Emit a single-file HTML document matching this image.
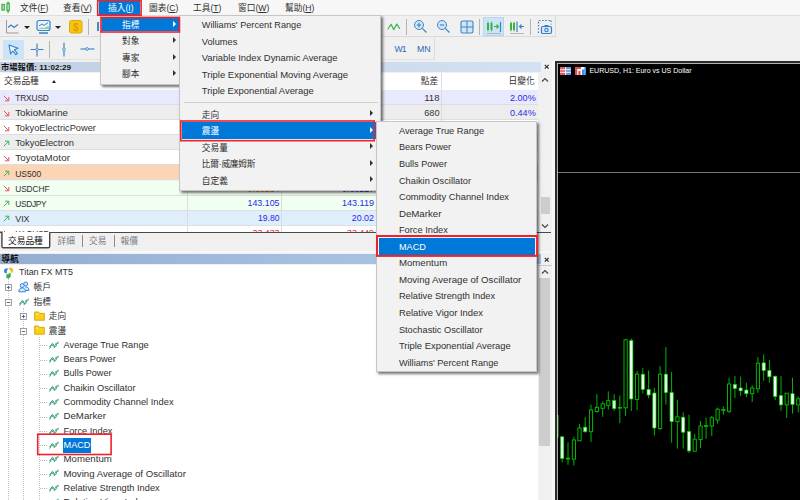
<!DOCTYPE html>
<html><head><meta charset="utf-8"><title>MT5</title>
<style>
html,body{margin:0;padding:0;overflow:hidden}
body{width:800px;height:500px;overflow:hidden;position:relative;background:#f0f0f0;
font-family:"Liberation Sans","Noto Sans CJK TC",sans-serif;font-size:9.3px;color:#303030;line-height:1}
.a{position:absolute}
.t{position:absolute;white-space:nowrap;line-height:12px;height:12px}
.menu{position:absolute;background:#f2f2f2;border:1px solid #c6c6c6;box-shadow:1.5px 1.5px 2.5px rgba(0,0,0,.55);box-sizing:border-box}
.arr{position:absolute;width:0;height:0;border-left:3px solid #222;border-top:3px solid transparent;border-bottom:3px solid transparent}
.red{position:absolute;border:1.6px solid #f0202c;box-sizing:border-box}
.hl{position:absolute;background:#0078d7}
.row{position:absolute;left:0;width:538px;box-sizing:border-box;border-bottom:1px solid #dedede}
.sep{position:absolute;width:1px;background:#b4b4b4}
.vl{position:absolute;width:1px;background:#dcdcdc}
</style></head><body>

<div class="a" style="left:0;top:0;width:800px;height:15px;background:#f7f7f7"></div>
<div class="a" style="left:0;top:15px;width:800px;height:1px;background:#dedede"></div>
<svg class="a" style="left:1px;top:1px" width="10" height="13" viewBox="0 0 10 13"><g fill="none" stroke="#3cb043" stroke-width="1.3"><rect x="1" y="3.5" width="2.2" height="5.5"/><rect x="6" y="2.5" width="2.2" height="7"/><path d="M7.1 0.5v2M7.1 9.5v2.5"/></g></svg>
<div class="t" style="left:20px;top:1.5px;color:#303030;font-size:8.6px"><span style="font-size:8.7px">文件</span>(<u>F</u>)</div>
<div class="t" style="left:63px;top:1.5px;color:#303030;font-size:8.6px"><span style="font-size:8.7px">查看</span>(<u>V</u>)</div>
<div class="hl" style="left:98.6px;top:1.2px;width:41.6px;height:13.4px"></div>
<div class="t" style="left:108px;top:1.5px;color:#fff;font-size:8.6px"><span style="font-size:8.7px">插入</span>(<u>I</u>)</div>
<div class="t" style="left:149px;top:1.5px;color:#303030;font-size:8.6px"><span style="font-size:8.7px">圖表</span>(<u>C</u>)</div>
<div class="t" style="left:193px;top:1.5px;color:#303030;font-size:8.6px"><span style="font-size:8.7px">工具</span>(<u>T</u>)</div>
<div class="t" style="left:238px;top:1.5px;color:#303030;font-size:8.6px"><span style="font-size:8.7px">窗口</span>(<u>W</u>)</div>
<div class="t" style="left:285px;top:1.5px;color:#303030;font-size:8.6px"><span style="font-size:8.7px">幫助</span>(<u>H</u>)</div>
<div class="a" style="left:0;top:16px;width:556px;height:21px;background:#f0f0f0;border-bottom:1px solid #dadada;border-right:1px solid #dadada;box-sizing:border-box"></div>
<svg class="a" style="left:5px;top:19px" width="16" height="16" viewBox="0 0 16 16"><path d="M1.5 1v13h12" fill="none" stroke="#9a9a9a" stroke-width="1"/><path d="M3 8.5l3-2.5 3 2.5 4-3" fill="none" stroke="#3a7fc4" stroke-width="1.2"/></svg>
<div class="a" style="left:24px;top:26px;width:0;height:0;border-top:3px solid #222;border-left:3px solid transparent;border-right:3px solid transparent"></div>
<svg class="a" style="left:36px;top:19px" width="16" height="16" viewBox="0 0 16 16"><rect x="1" y="1.5" width="13" height="10" rx="2" fill="#eaf3fb" stroke="#3a7fc4" stroke-width="1.2"/><path d="M3 7l3-2 2 1.5 4-3" fill="none" stroke="#3a7fc4" stroke-width="1"/><path d="M4 10v-1M6 10v-1.5M8 10v-1M10 10v-2M12 10v-2.5" stroke="#3cb043" stroke-width="1"/><path d="M3 14h9" stroke="#3a7fc4" stroke-width="1.5"/></svg>
<div class="a" style="left:55px;top:26px;width:0;height:0;border-top:3px solid #222;border-left:3px solid transparent;border-right:3px solid transparent"></div>
<svg class="a" style="left:69px;top:20px" width="14" height="14" viewBox="0 0 14 14"><rect x="0.5" y="0.5" width="12.5" height="12.5" rx="2" fill="#f6c511" stroke="#e0a800"/><text x="6.8" y="10.5" font-size="10" font-weight="bold" text-anchor="middle" fill="#e39b00" font-family="Liberation Sans, sans-serif">$</text></svg>
<div class="sep" style="left:88px;top:19px;height:16px"></div>
<div class="a" style="left:97px;top:22px;width:2px;height:9px;background:#4a86c8"></div>
<svg class="a" style="left:387px;top:21px" width="15" height="11" viewBox="0 0 15 11"><path d="M1 8L4 3.2 6.8 8.6 9.8 3 12.6 7.4" fill="none" stroke="#3cb854" stroke-width="1.2" stroke-linejoin="round" stroke-linecap="round"/></svg>
<div class="sep" style="left:406px;top:19px;height:16px"></div>
<svg class="a" style="left:413px;top:19px" width="16" height="16" viewBox="0 0 16 16"><circle cx="6" cy="6" r="4.5" fill="#d3e6f8" stroke="#3d85c6" stroke-width="1"/><path d="M3.8 6h4.4M6 3.8v4.4" stroke="#3a7fc4" stroke-width="1.1"/><path d="M9.3 9.3l4.2 4.2" stroke="#3d85c6" stroke-width="1.2"/></svg>
<svg class="a" style="left:436px;top:19px" width="16" height="16" viewBox="0 0 16 16"><circle cx="6" cy="6" r="4.5" fill="#d3e6f8" stroke="#3d85c6" stroke-width="1"/><path d="M3.8 6h4.4" stroke="#3a7fc4" stroke-width="1.1"/><path d="M9.3 9.3l4.2 4.2" stroke="#3d85c6" stroke-width="1.2"/></svg>
<svg class="a" style="left:460px;top:20px" width="14" height="14" viewBox="0 0 14 14"><rect x="1" y="1" width="12" height="12" rx="1.5" fill="#d3e6f8" stroke="#3d85c6" stroke-width="1.1"/><path d="M7 1v12M1 7h12" stroke="#3d85c6" stroke-width="1"/></svg>
<div class="sep" style="left:479.4px;top:19px;height:16px"></div>
<div class="a" style="left:483px;top:17px;width:21px;height:19px;background:#cce4f7;border:1px solid #b5d7f3;box-sizing:border-box"></div>
<svg class="a" style="left:485px;top:21px" width="18" height="14" viewBox="0 0 18 14"><g fill="#3cb043"><rect x="2" y="2" width="2" height="7"/><rect x="5.5" y="2" width="2" height="7"/></g><path d="M3 0.5v10M6.5 0.5v10" stroke="#3cb043" stroke-width=".8"/><path d="M9 5.5h4M11.5 3.5l2 2-2 2" fill="none" stroke="#3cb043" stroke-width="1.1"/><path d="M15.5 1v10" stroke="#3a7fc4" stroke-width="1.2"/><path d="M2 12.5h14" stroke="#a9a9a9" stroke-width=".8"/></svg>
<svg class="a" style="left:508px;top:21px" width="18" height="14" viewBox="0 0 18 14"><g fill="#3cb043"><rect x="2" y="2" width="2" height="7"/><rect x="5" y="2" width="2" height="7"/></g><path d="M3 0.5v10M6 0.5v10" stroke="#3cb043" stroke-width=".8"/><path d="M9 0.5v10.5" stroke="#3a7fc4" stroke-width="1.2"/><path d="M16 5.5h-4.5M13.5 3.5l-2 2 2 2" fill="none" stroke="#3a7fc4" stroke-width="1.1"/><path d="M2 12.5h14" stroke="#a9a9a9" stroke-width=".8"/></svg>
<div class="sep" style="left:529.6px;top:19px;height:16px"></div>
<svg class="a" style="left:537px;top:19px" width="16" height="16" viewBox="0 0 16 16"><path d="M1.5 14V1.5H14" fill="none" stroke="#3a7fc4" stroke-width="1.2" stroke-dasharray="1.6 1.6"/><path d="M14 1.5v4" fill="none" stroke="#3a7fc4" stroke-width="1.2" stroke-dasharray="1.6 1.6"/><rect x="4.5" y="7.5" width="10" height="7" rx="1.2" fill="#dcebf8" stroke="#3a7fc4" stroke-width="1.2"/><rect x="7.5" y="6" width="4" height="2" fill="#3a7fc4"/><circle cx="9.5" cy="11" r="1.7" fill="none" stroke="#3a7fc4" stroke-width="1.1"/></svg>
<div class="a" style="left:0;top:38px;width:435px;height:22px;background:#f0f0f0;border-right:1px solid #dadada;border-bottom:1px solid #e2e2e2;box-sizing:border-box"></div>
<div class="a" style="left:3px;top:40px;width:21px;height:19px;background:#cce4f7"></div>
<svg class="a" style="left:8px;top:44px" width="12" height="12" viewBox="0 0 12 12"><path d="M1 1l9 3.2-3.6 1.6 3 3.6-1.6 1.3-3-3.7L2.6 9.8z" fill="#eaf4fc" stroke="#3a7fc4" stroke-width="1.1" stroke-linejoin="round"/></svg>
<svg class="a" style="left:30px;top:43px" width="14" height="14" viewBox="0 0 14 14"><path d="M7 0.5v13M0.5 6.5h13" stroke="#3a7fc4" stroke-width="1.1"/><circle cx="7" cy="6.5" r="1.3" fill="#eaf4fc" stroke="#3a7fc4" stroke-width=".8"/></svg>
<div class="sep" style="left:49px;top:41px;height:17px"></div>
<svg class="a" style="left:60px;top:42px" width="8" height="15" viewBox="0 0 8 15"><path d="M4 0.5v14" stroke="#3a7fc4" stroke-width="1.1"/><circle cx="4" cy="7.5" r="1.4" fill="#eaf4fc" stroke="#3a7fc4" stroke-width=".8"/></svg>
<svg class="a" style="left:80px;top:45px" width="15" height="8" viewBox="0 0 15 8"><path d="M0.5 4h14" stroke="#3a7fc4" stroke-width="1.1"/><circle cx="7" cy="4" r="1.4" fill="#eaf4fc" stroke="#3a7fc4" stroke-width=".8"/></svg>
<div class="t" style="top:43.05px;font-size:8.65px;color:#2b6cb0;line-height:12px;height:12px;letter-spacing:-0.874px;left:394.40px;">W1</div>
<div class="t" style="top:43.05px;font-size:8.80px;color:#2b6cb0;line-height:12px;height:12px;left:416.90px;">MN</div>
<div class="a" style="left:0;top:61.5px;width:541px;height:10.6px;background:linear-gradient(to right,#c0cfe1,#d2e2f2)"></div>
<div class="t" style="left:1px;top:60.8px;color:#111;font-size:8.1px;font-weight:bold"><span style="font-size:8.3px">市場報價</span>: 11:02:29</div>
<svg class="a" style="left:544px;top:64px" width="6" height="6" viewBox="0 0 6 6"><path d="M.8 .8l3.8 3.8M4.6 .8l-3.8 3.8" stroke="#303030" stroke-width="1.2"/></svg>
<div class="a" style="left:0;top:73px;width:538px;height:17.2px;background:#fff"></div>
<div class="t" style="top:75.30px;font-size:8.7px;color:#303030;left:4.00px;">交易品種</div>
<div class="a" style="left:51.6px;top:79.7px;width:0;height:0;border-bottom:3px solid #222;border-left:2.5px solid transparent;border-right:2.5px solid transparent"></div>
<div class="t" style="top:75.20px;font-size:8.7px;color:#303030;right:361.80px;text-align:right;">點差</div>
<div class="t" style="top:75.20px;font-size:8.7px;color:#303030;right:265.40px;text-align:right;">日變化</div>
<div class="a" style="left:538px;top:73px;width:15px;height:159px;background:#f0f0f0"></div>
<svg class="a" style="left:541px;top:77px" width="8" height="6" viewBox="0 0 8 6"><path d="M1 4.5l3-3 3 3" fill="none" stroke="#444" stroke-width="1.2"/></svg>
<div class="a" style="left:541px;top:197px;width:9px;height:17px;background:#cdcdcd"></div>
<svg class="a" style="left:541px;top:223px" width="8" height="6" viewBox="0 0 8 6"><path d="M1 1.5l3 3 3-3" fill="none" stroke="#444" stroke-width="1.2"/></svg>
<div class="row" style="top:90.20px;height:15.05px;background:#e9e9fd"></div>
<svg class="a" style="left:3.4px;top:94.80px" width="7" height="7" viewBox="0 0 7 7"><path d="M.8 .8l4.8 4.8M2 5.8h3.8V2" fill="none" stroke="#e25660" stroke-width="1"/></svg>
<div class="t" style="top:92.25px;font-size:8.37px;color:#303030;line-height:12px;height:12px;letter-spacing:-0.134px;left:15.20px;">TRXUSD</div>
<div class="t" style="top:92.15px;font-size:9.56px;color:#333;line-height:12px;height:12px;right:360.50px;text-align:right;">118</div>
<div class="t" style="top:92.15px;font-size:9.08px;color:#2a2ae8;line-height:12px;height:12px;right:264.25px;text-align:right;">2.00%</div>
<div class="row" style="top:105.25px;height:15.05px;background:#ededed"></div>
<svg class="a" style="left:3.4px;top:109.85px" width="7" height="7" viewBox="0 0 7 7"><path d="M.8 .8l4.8 4.8M2 5.8h3.8V2" fill="none" stroke="#e25660" stroke-width="1"/></svg>
<div class="t" style="top:107.30px;font-size:9.77px;color:#303030;line-height:12px;height:12px;letter-spacing:0.020px;left:15.20px;">TokioMarine</div>
<div class="t" style="top:107.20px;font-size:9.14px;color:#333;line-height:12px;height:12px;right:360.50px;text-align:right;">680</div>
<div class="t" style="top:107.20px;font-size:9.08px;color:#2a2ae8;line-height:12px;height:12px;right:264.25px;text-align:right;">0.44%</div>
<div class="row" style="top:120.30px;height:15.05px;background:#ffffff"></div>
<svg class="a" style="left:3.4px;top:124.90px" width="7" height="7" viewBox="0 0 7 7"><path d="M.8 .8l4.8 4.8M2 5.8h3.8V2" fill="none" stroke="#e25660" stroke-width="1"/></svg>
<div class="t" style="top:122.35px;font-size:9.25px;color:#303030;line-height:12px;height:12px;left:15.20px;">TokyoElectricPower</div>
<div class="row" style="top:135.35px;height:15.05px;background:#ededed"></div>
<svg class="a" style="left:3.4px;top:139.55px" width="7" height="7" viewBox="0 0 7 7"><path d="M.8 6.2l4.8-4.8M2 1.2h3.8V5" fill="none" stroke="#3cb650" stroke-width="1"/></svg>
<div class="t" style="top:137.40px;font-size:9.35px;color:#303030;line-height:12px;height:12px;left:15.20px;">TokyoElectron</div>
<div class="row" style="top:150.40px;height:15.05px;background:#ffffff"></div>
<svg class="a" style="left:3.4px;top:155.00px" width="7" height="7" viewBox="0 0 7 7"><path d="M.8 .8l4.8 4.8M2 5.8h3.8V2" fill="none" stroke="#e25660" stroke-width="1"/></svg>
<div class="t" style="top:152.45px;font-size:9.77px;color:#303030;line-height:12px;height:12px;letter-spacing:0.101px;left:15.20px;">ToyotaMotor</div>
<div class="row" style="top:165.45px;height:15.05px;background:#fcd5b4"></div>
<svg class="a" style="left:3.4px;top:169.65px" width="7" height="7" viewBox="0 0 7 7"><path d="M.8 6.2l4.8-4.8M2 1.2h3.8V5" fill="none" stroke="#3cb650" stroke-width="1"/></svg>
<div class="t" style="top:167.50px;font-size:8.50px;color:#303030;line-height:12px;height:12px;left:15.20px;">US500</div>
<div class="row" style="top:180.50px;height:15.05px;background:#f0fff0"></div>
<svg class="a" style="left:3.4px;top:185.10px" width="7" height="7" viewBox="0 0 7 7"><path d="M.8 .8l4.8 4.8M2 5.8h3.8V2" fill="none" stroke="#e25660" stroke-width="1"/></svg>
<div class="t" style="top:182.55px;font-size:8.37px;color:#303030;line-height:12px;height:12px;letter-spacing:-0.096px;left:15.20px;">USDCHF</div>
<div class="t" style="top:183.25px;font-size:8.85px;color:#e8702a;line-height:12px;height:12px;right:520.50px;text-align:right;">0.88214</div>
<div class="t" style="top:183.25px;font-size:8.85px;color:#2a2ae8;line-height:12px;height:12px;right:426.00px;text-align:right;">0.88227</div>
<div class="row" style="top:195.55px;height:15.05px;background:#f0fff0"></div>
<svg class="a" style="left:3.4px;top:199.75px" width="7" height="7" viewBox="0 0 7 7"><path d="M.8 6.2l4.8-4.8M2 1.2h3.8V5" fill="none" stroke="#3cb650" stroke-width="1"/></svg>
<div class="t" style="top:197.60px;font-size:8.37px;color:#303030;line-height:12px;height:12px;letter-spacing:-0.304px;left:15.20px;">USDJPY</div>
<div class="t" style="top:197.00px;font-size:8.85px;color:#2a2ae8;line-height:12px;height:12px;right:520.50px;text-align:right;">143.105</div>
<div class="t" style="top:197.00px;font-size:9.04px;color:#2a2ae8;line-height:12px;height:12px;right:426.00px;text-align:right;">143.119</div>
<div class="row" style="top:210.60px;height:15.05px;background:#dfeefc"></div>
<svg class="a" style="left:3.4px;top:214.80px" width="7" height="7" viewBox="0 0 7 7"><path d="M.8 6.2l4.8-4.8M2 1.2h3.8V5" fill="none" stroke="#3cb650" stroke-width="1"/></svg>
<div class="t" style="top:212.65px;font-size:8.93px;color:#303030;line-height:12px;height:12px;left:15.20px;">VIX</div>
<div class="t" style="top:212.05px;font-size:8.59px;color:#2a2ae8;line-height:12px;height:12px;right:520.50px;text-align:right;">19.80</div>
<div class="t" style="top:212.05px;font-size:8.89px;color:#2a2ae8;line-height:12px;height:12px;right:426.00px;text-align:right;">20.02</div>
<div class="row" style="top:225.65px;height:15.05px;background:#ffffff"></div>
<svg class="a" style="left:3.4px;top:230.25px" width="7" height="7" viewBox="0 0 7 7"><path d="M.8 .8l4.8 4.8M2 5.8h3.8V2" fill="none" stroke="#e25660" stroke-width="1"/></svg>
<div class="t" style="top:227.70px;font-size:8.37px;color:#303030;line-height:12px;height:12px;letter-spacing:-0.190px;left:15.20px;">XAGUSD</div>
<div class="t" style="top:227.10px;font-size:8.83px;color:#e03030;line-height:12px;height:12px;right:520.50px;text-align:right;">33.433</div>
<div class="t" style="top:227.10px;font-size:8.83px;color:#e03030;line-height:12px;height:12px;right:426.00px;text-align:right;">33.449</div>
<div class="vl" style="left:187px;top:73px;height:159px"></div>
<div class="vl" style="left:281px;top:73px;height:159px"></div>
<div class="vl" style="left:376px;top:73px;height:159px"></div>
<div class="vl" style="left:440.8px;top:73px;height:159px"></div>
<div class="a" style="left:0;top:231.5px;width:553px;height:23px;background:#f0f0f0"></div>
<div class="a" style="left:0;top:250.6px;width:553px;height:2.4px;background:#f8f8f8"></div>
<div class="a" style="left:0;top:231.8px;width:551px;height:1.2px;background:#484848"></div>
<svg class="a" style="left:0;top:229px" width="60" height="22" viewBox="0 229 60 22"><path d="M1.9 232v14.2q0 1.6 1.6 1.6h44.6q1.6 0 1.6-1.6V232z" fill="#fff"/><path d="M0 232.3h1.900v13.900q0 1.6 1.6 1.6h44.6q1.6 0 1.6-1.6V232.3" fill="none" stroke="#444" stroke-width="1.4"/></svg>
<div class="t" style="top:234.80px;font-size:8.7px;color:#111;left:8.00px;">交易品種</div>
<div class="t" style="top:234.80px;font-size:8.7px;color:#7a7a7a;left:57.50px;">詳細</div>
<div class="a" style="left:81.6px;top:235.4px;width:1.3px;height:12px;background:#8e8e8e"></div>
<div class="t" style="top:234.80px;font-size:8.7px;color:#7a7a7a;left:89.00px;">交易</div>
<div class="a" style="left:113.6px;top:235.4px;width:1.3px;height:12px;background:#8e8e8e"></div>
<div class="t" style="top:234.80px;font-size:8.7px;color:#7a7a7a;left:120.50px;">報價</div>
<div class="a" style="left:0;top:254.4px;width:541px;height:10px;background:linear-gradient(to right,#93aed0,#a6c0e0 60%,#adc6e5)"></div>
<div class="t" style="top:253.20px;font-size:8.8px;color:#111;left:1.20px;font-weight:bold;">導航</div>
<svg class="a" style="left:544px;top:256.5px" width="6" height="6" viewBox="0 0 6 6"><path d="M.8 .8l3.8 3.8M4.6 .8l-3.8 3.8" stroke="#303030" stroke-width="1.2"/></svg>
<div class="a" style="left:0;top:265px;width:538px;height:235px;background:#fff"></div>
<div class="a" style="left:538px;top:265px;width:15px;height:235px;background:#f0f0f0"></div>
<svg class="a" style="left:541px;top:269px" width="8" height="6" viewBox="0 0 8 6"><path d="M1 4.5l3-3 3 3" fill="none" stroke="#444" stroke-width="1.2"/></svg>
<div class="a" style="left:539.2px;top:278.2px;width:10.6px;height:168px;background:#cdcdcd"></div><div class="a" style="left:538px;top:265px;width:13.5px;height:1px;background:#c9c9c9"></div>
<div class="a" style="left:8px;top:278px;width:0;height:222px;border-left:1px dotted #c4c4c4"></div>
<div class="a" style="left:23px;top:308px;width:0;height:192px;border-left:1px dotted #c4c4c4"></div>
<div class="a" style="left:38.5px;top:337px;width:0;height:163px;border-left:1px dotted #c4c4c4"></div>
<svg class="a" style="left:3px;top:266.5px" width="11" height="12" viewBox="0 0 11 12"><path d="M4.6 1.2C2.4 1 .9 2.2 1 4.2c.1 1.6 1.3 2.2 2.8 2.2V4.6c0-.9.4-1.4.8-1.6z" fill="#2f86e0"/><path d="M5.2 1.4l2.2-.9 2.6 1.6c.6 1.6.2 3.2-1.2 4L7.4 5.4c.6-.8.6-1.8-.2-2.4z" fill="#f4b920"/><path d="M3.4 7.2h2.4V6l2 .4v2.2c0 1.8-1 2.8-2.6 2.8S2.8 10.4 3.4 9z" fill="#36b24a"/></svg>
<div class="t" style="top:265.95px;font-size:8.97px;color:#303030;line-height:12px;height:12px;left:19.00px;">Titan FX MT5</div>
<svg class="a" style="left:5.0px;top:283.7px" width="7" height="7" viewBox="0 0 7 7"><rect x=".5" y=".5" width="6" height="6" fill="#fff" stroke="#8a8a8a" stroke-width=".8"/><path d="M1.8 3.5h3.4" stroke="#3a5fa0" stroke-width=".9"/><path d="M3.5 1.8v3.4" stroke="#3a5fa0" stroke-width=".9"/></svg>
<svg class="a" style="left:18px;top:281px" width="12" height="12" viewBox="0 0 12 12"><circle cx="7.6" cy="3" r="2" fill="#d6e9fb" stroke="#2f86d9" stroke-width="1"/><path d="M7.2 6c2.4-.2 3.8 1 3.8 3.4H8" fill="#d6e9fb" stroke="#2f86d9" stroke-width="1"/><circle cx="4.2" cy="4.6" r="2" fill="#d6e9fb" stroke="#2f86d9" stroke-width="1"/><path d="M.8 10.8c0-2.8 1.4-3.8 3.4-3.8s3.4 1 3.4 3.8z" fill="#d6e9fb" stroke="#2f86d9" stroke-width="1"/></svg>
<div class="t" style="top:281.10px;font-size:8.7px;color:#303030;left:33.50px;">帳戶</div>
<svg class="a" style="left:5.0px;top:298.5px" width="7" height="7" viewBox="0 0 7 7"><rect x=".5" y=".5" width="6" height="6" fill="#fff" stroke="#8a8a8a" stroke-width=".8"/><path d="M1.8 3.5h3.4" stroke="#3a5fa0" stroke-width=".9"/></svg>
<svg class="a" style="left:19px;top:297.50px" width="10" height="9" viewBox="0 0 10 9"><path d="M.5 7.6C1.8 7.6 2 2.4 3.4 2.4S4.8 6.4 5.9 6.4 7.6 1.2 9.6 1" fill="none" stroke="#3a7fc4" stroke-width="1"/><path d="M.5 6.2l2.4-2.6 2.2 2.4 2.2-3.8 2.3-.2" fill="none" stroke="#35b34a" stroke-width="1.1" stroke-dasharray="2.2 .9"/></svg>
<div class="t" style="top:296.10px;font-size:8.7px;color:#303030;left:33.50px;">指標</div>
<svg class="a" style="left:20.0px;top:312.5px" width="7" height="7" viewBox="0 0 7 7"><rect x=".5" y=".5" width="6" height="6" fill="#fff" stroke="#8a8a8a" stroke-width=".8"/><path d="M1.8 3.5h3.4" stroke="#3a5fa0" stroke-width=".9"/><path d="M3.5 1.8v3.4" stroke="#3a5fa0" stroke-width=".9"/></svg>
<svg class="a" style="left:33.5px;top:310.6px" width="11" height="10" viewBox="0 0 11 10"><path d="M.7 1h3.8l.8 1.4h5v6.8H.7z" fill="#fbd01c" stroke="#dfa800" stroke-width="1"/><path d="M2.4 3.2h1.800" stroke="#fff6c8" stroke-width="1"/></svg>
<div class="t" style="top:309.70px;font-size:8.7px;color:#303030;left:48.80px;">走向</div>
<svg class="a" style="left:20.0px;top:327.5px" width="7" height="7" viewBox="0 0 7 7"><rect x=".5" y=".5" width="6" height="6" fill="#fff" stroke="#8a8a8a" stroke-width=".8"/><path d="M1.8 3.5h3.4" stroke="#3a5fa0" stroke-width=".9"/></svg>
<svg class="a" style="left:33.5px;top:325.2px" width="11" height="10" viewBox="0 0 11 10"><path d="M.7 1h3.8l.8 1.4h5v6.8H.7z" fill="#fbd01c" stroke="#dfa800" stroke-width="1"/><path d="M2.4 3.2h1.800" stroke="#fff6c8" stroke-width="1"/></svg>
<div class="t" style="top:324.70px;font-size:8.7px;color:#303030;left:48.80px;">震盪</div>
<div class="a" style="left:40px;top:345.20px;width:7px;height:0;border-top:1px dotted #b8b8b8"></div>
<svg class="a" style="left:49px;top:340.70px" width="10" height="9" viewBox="0 0 10 9"><path d="M.5 7.6C1.8 7.6 2 2.4 3.4 2.4S4.8 6.4 5.9 6.4 7.6 1.2 9.6 1" fill="none" stroke="#3a7fc4" stroke-width="1"/><path d="M.5 6.2l2.4-2.6 2.2 2.4 2.2-3.8 2.3-.2" fill="none" stroke="#35b34a" stroke-width="1.1" stroke-dasharray="2.2 .9"/></svg>
<div class="t" style="top:338.85px;font-size:9.26px;color:#303030;line-height:12px;height:12px;left:63.50px;">Average True Range</div>
<div class="a" style="left:40px;top:359.50px;width:7px;height:0;border-top:1px dotted #b8b8b8"></div>
<svg class="a" style="left:49px;top:355.00px" width="10" height="9" viewBox="0 0 10 9"><path d="M.5 7.6C1.8 7.6 2 2.4 3.4 2.4S4.8 6.4 5.9 6.4 7.6 1.2 9.6 1" fill="none" stroke="#3a7fc4" stroke-width="1"/><path d="M.5 6.2l2.4-2.6 2.2 2.4 2.2-3.8 2.3-.2" fill="none" stroke="#35b34a" stroke-width="1.1" stroke-dasharray="2.2 .9"/></svg>
<div class="t" style="top:353.15px;font-size:9.14px;color:#303030;line-height:12px;height:12px;left:63.50px;">Bears Power</div>
<div class="a" style="left:40px;top:373.80px;width:7px;height:0;border-top:1px dotted #b8b8b8"></div>
<svg class="a" style="left:49px;top:369.30px" width="10" height="9" viewBox="0 0 10 9"><path d="M.5 7.6C1.8 7.6 2 2.4 3.4 2.4S4.8 6.4 5.9 6.4 7.6 1.2 9.6 1" fill="none" stroke="#3a7fc4" stroke-width="1"/><path d="M.5 6.2l2.4-2.6 2.2 2.4 2.2-3.8 2.3-.2" fill="none" stroke="#35b34a" stroke-width="1.1" stroke-dasharray="2.2 .9"/></svg>
<div class="t" style="top:367.45px;font-size:9.11px;color:#303030;line-height:12px;height:12px;left:63.50px;">Bulls Power</div>
<div class="a" style="left:40px;top:388.10px;width:7px;height:0;border-top:1px dotted #b8b8b8"></div>
<svg class="a" style="left:49px;top:383.60px" width="10" height="9" viewBox="0 0 10 9"><path d="M.5 7.6C1.8 7.6 2 2.4 3.4 2.4S4.8 6.4 5.9 6.4 7.6 1.2 9.6 1" fill="none" stroke="#3a7fc4" stroke-width="1"/><path d="M.5 6.2l2.4-2.6 2.2 2.4 2.2-3.8 2.3-.2" fill="none" stroke="#35b34a" stroke-width="1.1" stroke-dasharray="2.2 .9"/></svg>
<div class="t" style="top:381.75px;font-size:9.28px;color:#303030;line-height:12px;height:12px;left:63.50px;">Chaikin Oscillator</div>
<div class="a" style="left:40px;top:402.40px;width:7px;height:0;border-top:1px dotted #b8b8b8"></div>
<svg class="a" style="left:49px;top:397.90px" width="10" height="9" viewBox="0 0 10 9"><path d="M.5 7.6C1.8 7.6 2 2.4 3.4 2.4S4.8 6.4 5.9 6.4 7.6 1.2 9.6 1" fill="none" stroke="#3a7fc4" stroke-width="1"/><path d="M.5 6.2l2.4-2.6 2.2 2.4 2.2-3.8 2.3-.2" fill="none" stroke="#35b34a" stroke-width="1.1" stroke-dasharray="2.2 .9"/></svg>
<div class="t" style="top:396.05px;font-size:9.35px;color:#303030;line-height:12px;height:12px;left:63.50px;">Commodity Channel Index</div>
<div class="a" style="left:40px;top:416.70px;width:7px;height:0;border-top:1px dotted #b8b8b8"></div>
<svg class="a" style="left:49px;top:412.20px" width="10" height="9" viewBox="0 0 10 9"><path d="M.5 7.6C1.8 7.6 2 2.4 3.4 2.4S4.8 6.4 5.9 6.4 7.6 1.2 9.6 1" fill="none" stroke="#3a7fc4" stroke-width="1"/><path d="M.5 6.2l2.4-2.6 2.2 2.4 2.2-3.8 2.3-.2" fill="none" stroke="#35b34a" stroke-width="1.1" stroke-dasharray="2.2 .9"/></svg>
<div class="t" style="top:410.35px;font-size:9.68px;color:#303030;line-height:12px;height:12px;left:63.50px;">DeMarker</div>
<div class="a" style="left:40px;top:431.00px;width:7px;height:0;border-top:1px dotted #b8b8b8"></div>
<svg class="a" style="left:49px;top:426.50px" width="10" height="9" viewBox="0 0 10 9"><path d="M.5 7.6C1.8 7.6 2 2.4 3.4 2.4S4.8 6.4 5.9 6.4 7.6 1.2 9.6 1" fill="none" stroke="#3a7fc4" stroke-width="1"/><path d="M.5 6.2l2.4-2.6 2.2 2.4 2.2-3.8 2.3-.2" fill="none" stroke="#35b34a" stroke-width="1.1" stroke-dasharray="2.2 .9"/></svg>
<div class="t" style="top:424.65px;font-size:9.28px;color:#303030;line-height:12px;height:12px;left:63.50px;">Force Index</div>
<div class="a" style="left:40px;top:445.30px;width:7px;height:0;border-top:1px dotted #b8b8b8"></div>
<svg class="a" style="left:49px;top:440.80px" width="10" height="9" viewBox="0 0 10 9"><path d="M.5 7.6C1.8 7.6 2 2.4 3.4 2.4S4.8 6.4 5.9 6.4 7.6 1.2 9.6 1" fill="none" stroke="#3a7fc4" stroke-width="1"/><path d="M.5 6.2l2.4-2.6 2.2 2.4 2.2-3.8 2.3-.2" fill="none" stroke="#35b34a" stroke-width="1.1" stroke-dasharray="2.2 .9"/></svg>
<div class="hl" style="left:63px;top:438.00px;width:28px;height:14.5px"></div>
<div class="t" style="top:438.95px;font-size:9.17px;color:#fff;line-height:12px;height:12px;left:63.50px;">MACD</div>
<div class="a" style="left:40px;top:459.60px;width:7px;height:0;border-top:1px dotted #b8b8b8"></div>
<svg class="a" style="left:49px;top:455.10px" width="10" height="9" viewBox="0 0 10 9"><path d="M.5 7.6C1.8 7.6 2 2.4 3.4 2.4S4.8 6.4 5.9 6.4 7.6 1.2 9.6 1" fill="none" stroke="#3a7fc4" stroke-width="1"/><path d="M.5 6.2l2.4-2.6 2.2 2.4 2.2-3.8 2.3-.2" fill="none" stroke="#35b34a" stroke-width="1.1" stroke-dasharray="2.2 .9"/></svg>
<div class="t" style="top:453.25px;font-size:9.66px;color:#303030;line-height:12px;height:12px;left:63.50px;">Momentum</div>
<div class="a" style="left:40px;top:473.90px;width:7px;height:0;border-top:1px dotted #b8b8b8"></div>
<svg class="a" style="left:49px;top:469.40px" width="10" height="9" viewBox="0 0 10 9"><path d="M.5 7.6C1.8 7.6 2 2.4 3.4 2.4S4.8 6.4 5.9 6.4 7.6 1.2 9.6 1" fill="none" stroke="#3a7fc4" stroke-width="1"/><path d="M.5 6.2l2.4-2.6 2.2 2.4 2.2-3.8 2.3-.2" fill="none" stroke="#35b34a" stroke-width="1.1" stroke-dasharray="2.2 .9"/></svg>
<div class="t" style="top:467.55px;font-size:9.65px;color:#303030;line-height:12px;height:12px;left:63.50px;">Moving Average of Oscillator</div>
<div class="a" style="left:40px;top:488.20px;width:7px;height:0;border-top:1px dotted #b8b8b8"></div>
<svg class="a" style="left:49px;top:483.70px" width="10" height="9" viewBox="0 0 10 9"><path d="M.5 7.6C1.8 7.6 2 2.4 3.4 2.4S4.8 6.4 5.9 6.4 7.6 1.2 9.6 1" fill="none" stroke="#3a7fc4" stroke-width="1"/><path d="M.5 6.2l2.4-2.6 2.2 2.4 2.2-3.8 2.3-.2" fill="none" stroke="#35b34a" stroke-width="1.1" stroke-dasharray="2.2 .9"/></svg>
<div class="t" style="top:481.85px;font-size:9.26px;color:#303030;line-height:12px;height:12px;left:63.50px;">Relative Strength Index</div>
<div class="a" style="left:40px;top:502.50px;width:7px;height:0;border-top:1px dotted #b8b8b8"></div>
<svg class="a" style="left:49px;top:498.00px" width="10" height="9" viewBox="0 0 10 9"><path d="M.5 7.6C1.8 7.6 2 2.4 3.4 2.4S4.8 6.4 5.9 6.4 7.6 1.2 9.6 1" fill="none" stroke="#3a7fc4" stroke-width="1"/><path d="M.5 6.2l2.4-2.6 2.2 2.4 2.2-3.8 2.3-.2" fill="none" stroke="#35b34a" stroke-width="1.1" stroke-dasharray="2.2 .9"/></svg>
<div class="t" style="top:496.15px;font-size:9.44px;color:#303030;line-height:12px;height:12px;left:63.50px;">Relative Vigor Index</div>
<div class="a" style="left:551.5px;top:61px;width:3.7px;height:439px;background:#f8f8f8"></div>
<div class="a" style="left:555.2px;top:61.2px;width:245px;height:439px;background:#000"></div>
<div class="a" style="left:555.2px;top:61.2px;width:245px;height:1.7px;background:#2c2c2c"></div>
<div class="a" style="left:555.2px;top:61.2px;width:1.6px;height:439px;background:#2c2c2c"></div>
<div class="a" style="left:556.8px;top:62.9px;width:0.9px;height:437px;background:#b0b0b0"></div>
<div class="a" style="left:556.8px;top:62.9px;width:244px;height:0.9px;background:#b0b0b0"></div>
<div class="a" style="left:557.6px;top:172.2px;width:243px;height:1.3px;background:#70767c"></div>
<svg class="a" style="left:560px;top:67px" width="11" height="8" viewBox="0 0 11 8"><rect width="11" height="8" fill="#e8eef6"/><rect x="0" y="0" width="5" height="8" fill="#e8585f"/><rect x="6" y="0" width="5" height="8" fill="#5a9bdc"/><path d="M0 2.7h11M0 5.3h11" stroke="#fff" stroke-width=".9"/></svg>
<svg class="a" style="left:575px;top:67px" width="11" height="8" viewBox="0 0 11 8"><rect width="11" height="8" fill="#fff"/><rect x="0" y="0" width="2.2" height="8" fill="#e8484f"/><rect x="0" y="0" width="6" height="2" fill="#e8484f"/><rect x="3.4" y="4" width="2" height="4" fill="#e8484f"/><rect x="7" y="2.5" width="2.4" height="5.5" fill="#3f8fe0"/><rect x="9.4" y="0" width="1.6" height="8" fill="#3f8fe0"/></svg>
<div class="t" style="top:64.75px;font-size:7.03px;color:#fff;line-height:12px;height:12px;left:589.40px;">EURUSD, H1: Euro vs US Dollar</div>
<svg class="a" style="left:0;top:0" width="800" height="500" viewBox="0 0 800 500"><rect x="557" y="415" width="1.3" height="22.6" fill="#9be89b"/><path d="M562.2 436.8V462.4" stroke="#00b400" stroke-width="1"/><rect x="560.6" y="436.8" width="3.2" height="21.6" fill="#eaffea" stroke="#00d200" stroke-width=".7"/><path d="M568.0 442.4V458.2M568.0 459V464.8" stroke="#00b400" stroke-width="1"/><rect x="566.4" y="458.2" width="3.2" height="0.8" fill="#000" stroke="#00c800" stroke-width=".9"/><path d="M573.9 436.8V440M573.9 459.2V465.6" stroke="#00b400" stroke-width="1"/><rect x="572.3" y="440" width="3.2" height="19.2" fill="#000" stroke="#00c800" stroke-width=".9"/><path d="M579.5 424V428M579.5 440.8V440.8" stroke="#00b400" stroke-width="1"/><rect x="577.9" y="428" width="3.2" height="12.8" fill="#000" stroke="#00c800" stroke-width=".9"/><path d="M585.2 417.3V432.8" stroke="#00b400" stroke-width="1"/><rect x="583.6" y="427.2" width="3.2" height="4.5" fill="#eaffea" stroke="#00d200" stroke-width=".7"/><path d="M591.0 404.5V410M591.0 431.7V442" stroke="#00b400" stroke-width="1"/><rect x="589.4" y="410" width="3.2" height="21.7" fill="#000" stroke="#00c800" stroke-width=".9"/><path d="M596.9 394.2V407.3M596.9 411.5V412.6" stroke="#00b400" stroke-width="1"/><rect x="595.3" y="407.3" width="3.2" height="4.2" fill="#000" stroke="#00c800" stroke-width=".9"/><path d="M602.7 401.4V403.8M602.7 408.3V416.8" stroke="#00b400" stroke-width="1"/><rect x="601.1" y="403.8" width="3.2" height="4.5" fill="#000" stroke="#00c800" stroke-width=".9"/><path d="M608.3 391.3V400.6M608.3 405.4V409.5" stroke="#00b400" stroke-width="1"/><rect x="606.7" y="400.6" width="3.2" height="4.8" fill="#000" stroke="#00c800" stroke-width=".9"/><path d="M614.2 394.2V411" stroke="#00b400" stroke-width="1"/><rect x="612.6" y="400.6" width="3.2" height="8.0" fill="#eaffea" stroke="#00d200" stroke-width=".7"/><path d="M619.8 395.5V407.4M619.8 408.2V423.2" stroke="#00b400" stroke-width="1"/><rect x="618.2" y="407.4" width="3.2" height="0.8" fill="#000" stroke="#00c800" stroke-width=".9"/><path d="M625.6 339V339.8M625.6 407.8V416" stroke="#00b400" stroke-width="1"/><rect x="624.0" y="339.8" width="3.2" height="68.0" fill="#000" stroke="#00c800" stroke-width=".9"/><path d="M631.3 338.5V411" stroke="#00b400" stroke-width="1"/><rect x="629.7" y="340.6" width="3.2" height="58.4" fill="#eaffea" stroke="#00d200" stroke-width=".7"/><path d="M637.1 371V374.2M637.1 399.5V410.2" stroke="#00b400" stroke-width="1"/><rect x="635.5" y="374.2" width="3.2" height="25.3" fill="#000" stroke="#00c800" stroke-width=".9"/><path d="M642.8 367.8V393.4" stroke="#00b400" stroke-width="1"/><rect x="641.2" y="374.2" width="3.2" height="15.2" fill="#eaffea" stroke="#00d200" stroke-width=".7"/><path d="M648.6 370.5V398.2" stroke="#00b400" stroke-width="1"/><rect x="647.0" y="389.4" width="3.2" height="5.6" fill="#eaffea" stroke="#00d200" stroke-width=".7"/><path d="M654.4 387.8V435.5" stroke="#00b400" stroke-width="1"/><rect x="652.8" y="393" width="3.2" height="35.0" fill="#eaffea" stroke="#00d200" stroke-width=".7"/><path d="M660.1 366.2V374.2M660.1 428.5V430" stroke="#00b400" stroke-width="1"/><rect x="658.5" y="374.2" width="3.2" height="54.3" fill="#000" stroke="#00c800" stroke-width=".9"/><path d="M665.9 347V404.6" stroke="#00b400" stroke-width="1"/><rect x="664.3" y="374.2" width="3.2" height="18.4" fill="#eaffea" stroke="#00d200" stroke-width=".7"/><path d="M671.6 372V442.5" stroke="#00b400" stroke-width="1"/><rect x="670.0" y="392.6" width="3.2" height="29.0" fill="#eaffea" stroke="#00d200" stroke-width=".7"/><path d="M677.4 399.8V416.8M677.4 421.6V448.6" stroke="#00b400" stroke-width="1"/><rect x="675.8" y="416.8" width="3.2" height="4.8" fill="#000" stroke="#00c800" stroke-width=".9"/><path d="M683.2 412.4V448.5" stroke="#00b400" stroke-width="1"/><rect x="681.6" y="417.2" width="3.2" height="15.0" fill="#eaffea" stroke="#00d200" stroke-width=".7"/><path d="M689.0 414.8V452.8" stroke="#00b400" stroke-width="1"/><rect x="687.4" y="431.5" width="3.2" height="19.4" fill="#eaffea" stroke="#00d200" stroke-width=".7"/><path d="M694.7 434V439.2M694.7 451.2V451.2" stroke="#00b400" stroke-width="1"/><rect x="693.1" y="439.2" width="3.2" height="12.0" fill="#000" stroke="#00c800" stroke-width=".9"/><path d="M700.5 421V426M700.5 439.5V448.2" stroke="#00b400" stroke-width="1"/><rect x="698.9" y="426" width="3.2" height="13.5" fill="#000" stroke="#00c800" stroke-width=".9"/><path d="M706.1 417.7V425.6M706.1 426.4V438.8" stroke="#00b400" stroke-width="1"/><rect x="704.5" y="425.6" width="3.2" height="0.8" fill="#000" stroke="#00c800" stroke-width=".9"/><path d="M711.8 416V417.7M711.8 426V436" stroke="#00b400" stroke-width="1"/><rect x="710.2" y="417.7" width="3.2" height="8.3" fill="#000" stroke="#00c800" stroke-width=".9"/><path d="M717.6 407.6V409.2M717.6 420V423.6" stroke="#00b400" stroke-width="1"/><rect x="716.0" y="409.2" width="3.2" height="10.8" fill="#000" stroke="#00c800" stroke-width=".9"/><path d="M723.4 406.5V409.6M723.4 410.4V414.8" stroke="#00b400" stroke-width="1"/><rect x="721.8" y="409.6" width="3.2" height="0.8" fill="#000" stroke="#00c800" stroke-width=".9"/><path d="M729.1 377.7V384M729.1 411.3V412.9" stroke="#00b400" stroke-width="1"/><rect x="727.5" y="384" width="3.2" height="27.3" fill="#000" stroke="#00c800" stroke-width=".9"/><path d="M734.9 376V398" stroke="#00b400" stroke-width="1"/><rect x="733.3" y="384.4" width="3.2" height="4.0" fill="#eaffea" stroke="#00d200" stroke-width=".7"/><path d="M740.6 376.7V396" stroke="#00b400" stroke-width="1"/><rect x="739.0" y="388" width="3.2" height="2.8" fill="#eaffea" stroke="#00d200" stroke-width=".7"/><path d="M746.4 382.8V397.2" stroke="#00b400" stroke-width="1"/><rect x="744.8" y="390" width="3.2" height="3.7" fill="#eaffea" stroke="#00d200" stroke-width=".7"/><path d="M752.2 385.2V388M752.2 393.7V402" stroke="#00b400" stroke-width="1"/><rect x="750.6" y="388" width="3.2" height="5.7" fill="#000" stroke="#00c800" stroke-width=".9"/><path d="M757.9 357.1V363.2M757.9 388.8V392.8" stroke="#00b400" stroke-width="1"/><rect x="756.3" y="363.2" width="3.2" height="25.6" fill="#000" stroke="#00c800" stroke-width=".9"/><path d="M763.7 354.4V380.8" stroke="#00b400" stroke-width="1"/><rect x="762.1" y="362.9" width="3.2" height="7.5" fill="#eaffea" stroke="#00d200" stroke-width=".7"/><path d="M769.4 360V382.7" stroke="#00b400" stroke-width="1"/><rect x="767.8" y="370.4" width="3.2" height="6.4" fill="#eaffea" stroke="#00d200" stroke-width=".7"/><path d="M775.2 375.5V400" stroke="#00b400" stroke-width="1"/><rect x="773.6" y="376.3" width="3.2" height="20.2" fill="#eaffea" stroke="#00d200" stroke-width=".7"/><path d="M781.0 376V410.8" stroke="#00b400" stroke-width="1"/><rect x="779.4" y="395.6" width="3.2" height="9.3" fill="#eaffea" stroke="#00d200" stroke-width=".7"/><path d="M786.7 393.2V393.2M786.7 404.9V418" stroke="#00b400" stroke-width="1"/><rect x="785.1" y="393.2" width="3.2" height="11.7" fill="#000" stroke="#00c800" stroke-width=".9"/><path d="M792.5 377.7V413.5" stroke="#00b400" stroke-width="1"/><rect x="790.9" y="393.7" width="3.2" height="10.7" fill="#eaffea" stroke="#00d200" stroke-width=".7"/><path d="M798.2 396.4V398.8M798.2 404.9V412.4" stroke="#00b400" stroke-width="1"/><rect x="796.6" y="398.8" width="3.2" height="6.1" fill="#000" stroke="#00c800" stroke-width=".9"/></svg>
<div class="menu" style="left:100px;top:16px;width:81px;height:68.6px"></div>
<div class="hl" style="left:101.6px;top:18.4px;width:77px;height:12.9px"></div>
<div class="t" style="top:18.90px;font-size:8.7px;color:#fff;left:122.00px;">指標</div>
<div class="arr" style="left:173.4px;top:20.60px;border-left-color:#fff"></div>
<div class="t" style="top:35.40px;font-size:8.7px;color:#303030;left:122.00px;">對象</div>
<div class="arr" style="left:173.4px;top:37.10px;border-left-color:#303030"></div>
<div class="t" style="top:51.90px;font-size:8.7px;color:#303030;left:122.00px;">專家</div>
<div class="arr" style="left:173.4px;top:53.60px;border-left-color:#303030"></div>
<div class="t" style="top:68.40px;font-size:8.7px;color:#303030;left:122.00px;">腳本</div>
<div class="arr" style="left:173.4px;top:70.10px;border-left-color:#303030"></div>
<div class="menu" style="left:179.4px;top:15.4px;width:201.6px;height:175.2px"></div>
<div class="t" style="top:19.15px;font-size:9.17px;color:#303030;line-height:12px;height:12px;left:201.80px;">Williams&#x27; Percent Range</div>
<div class="t" style="top:35.63px;font-size:9.28px;color:#303030;line-height:12px;height:12px;left:201.80px;">Volumes</div>
<div class="t" style="top:52.11px;font-size:9.41px;color:#303030;line-height:12px;height:12px;left:201.80px;">Variable Index Dynamic Average</div>
<div class="t" style="top:68.59px;font-size:9.51px;color:#303030;line-height:12px;height:12px;left:201.80px;">Triple Exponential Moving Average</div>
<div class="t" style="top:85.07px;font-size:9.42px;color:#303030;line-height:12px;height:12px;left:201.80px;">Triple Exponential Average</div>
<div class="a" style="left:183.5px;top:101.6px;width:194px;height:1px;background:#cfcfcf"></div>
<div class="t" style="top:108.70px;font-size:8.7px;color:#303030;left:201.80px;">走向</div>
<div class="arr" style="left:370.3px;top:110.00px;border-left-color:#303030"></div>
<div class="hl" style="left:181.5px;top:122.2px;width:195.3px;height:17.3px"></div>
<div class="t" style="top:125.20px;font-size:8.7px;color:#fff;left:201.80px;">震盪</div>
<div class="arr" style="left:370.3px;top:126.50px;border-left-color:#fff"></div>
<div class="t" style="top:141.70px;font-size:8.7px;color:#303030;left:201.80px;">交易量</div>
<div class="arr" style="left:370.3px;top:143.00px;border-left-color:#303030"></div>
<div class="t" style="top:158.20px;font-size:8.7px;color:#303030;left:201.80px;letter-spacing:-0.22px;">比爾·威廉姆斯</div>
<div class="arr" style="left:370.3px;top:159.50px;border-left-color:#303030"></div>
<div class="t" style="top:174.70px;font-size:8.7px;color:#303030;left:201.80px;">自定義</div>
<div class="arr" style="left:370.3px;top:176.00px;border-left-color:#303030"></div>
<div class="menu" style="left:376.2px;top:120.8px;width:160.8px;height:251.6px"></div>
<div class="t" style="top:124.85px;font-size:9.26px;color:#303030;line-height:12px;height:12px;left:398.90px;">Average True Range</div>
<div class="t" style="top:141.41px;font-size:9.14px;color:#303030;line-height:12px;height:12px;left:398.90px;">Bears Power</div>
<div class="t" style="top:157.97px;font-size:9.11px;color:#303030;line-height:12px;height:12px;left:398.90px;">Bulls Power</div>
<div class="t" style="top:174.53px;font-size:9.28px;color:#303030;line-height:12px;height:12px;left:398.90px;">Chaikin Oscillator</div>
<div class="t" style="top:191.09px;font-size:9.35px;color:#303030;line-height:12px;height:12px;left:398.90px;">Commodity Channel Index</div>
<div class="t" style="top:207.65px;font-size:9.68px;color:#303030;line-height:12px;height:12px;left:398.90px;">DeMarker</div>
<div class="t" style="top:224.21px;font-size:9.28px;color:#303030;line-height:12px;height:12px;left:398.90px;">Force Index</div>
<div class="hl" style="left:378.6px;top:237.6px;width:156.6px;height:17.2px"></div>
<div class="t" style="top:240.77px;font-size:9.17px;color:#fff;line-height:12px;height:12px;left:398.90px;">MACD</div>
<div class="t" style="top:257.33px;font-size:9.66px;color:#303030;line-height:12px;height:12px;left:398.90px;">Momentum</div>
<div class="t" style="top:273.89px;font-size:9.65px;color:#303030;line-height:12px;height:12px;left:398.90px;">Moving Average of Oscillator</div>
<div class="t" style="top:290.45px;font-size:9.26px;color:#303030;line-height:12px;height:12px;left:398.90px;">Relative Strength Index</div>
<div class="t" style="top:307.01px;font-size:9.44px;color:#303030;line-height:12px;height:12px;left:398.90px;">Relative Vigor Index</div>
<div class="t" style="top:323.57px;font-size:9.24px;color:#303030;line-height:12px;height:12px;left:398.90px;">Stochastic Oscillator</div>
<div class="t" style="top:340.13px;font-size:9.42px;color:#303030;line-height:12px;height:12px;left:398.90px;">Triple Exponential Average</div>
<div class="t" style="top:356.69px;font-size:9.17px;color:#303030;line-height:12px;height:12px;left:398.90px;">Williams&#x27; Percent Range</div>
<svg class="a" style="left:0;top:0" width="800" height="500" viewBox="0 0 800 500"><rect x="37.70" y="434.20" width="73.40" height="20.30" fill="none" stroke="#f2202c" stroke-width="1.6"/><rect x="180.80" y="121.00" width="193.40" height="19.70" fill="none" stroke="#f2202c" stroke-width="1.6"/><rect x="377.00" y="236.00" width="160.10" height="19.90" fill="none" stroke="#f2202c" stroke-width="2.0"/><rect x="101.05" y="17.70" width="78.40" height="14.30" fill="none" stroke="#f2202c" stroke-width="1.6"/><rect x="97.70" y="0.50" width="43.40" height="14.70" fill="none" stroke="#f2202c" stroke-width="1.6"/></svg>
</body></html>
